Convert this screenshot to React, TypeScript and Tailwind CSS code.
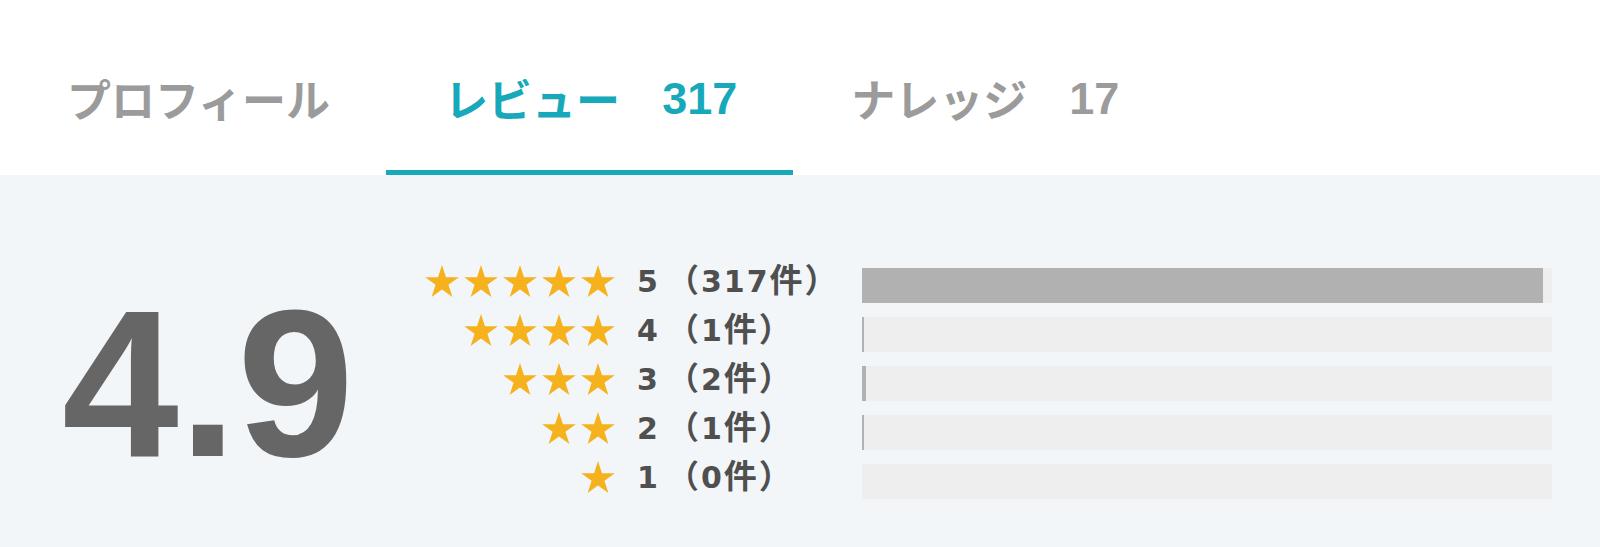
import { useState } from 'react'

const tabs = [
  { key: 'profile', label: 'プロフィール' },
  { key: 'review', label: 'レビュー', count: 317 },
  { key: 'knowledge', label: 'ナレッジ', count: 17 },
]

const breakdown = [
  { stars: 5, count: 317 },
  { stars: 4, count: 1 },
  { stars: 3, count: 2 },
  { stars: 2, count: 1 },
  { stars: 1, count: 0 },
]

const total = breakdown.reduce((sum, r) => sum + r.count, 0)

function Star() {
  return (
    <svg viewBox="2.45 0 95.1 90.45" className="h-[32px] w-[34px] shrink-0">
      <polygon
        fill="#f5b21c"
        points="50,0 61.23,34.55 97.55,34.55 68.16,55.9 79.39,90.45 50,69.1 20.61,90.45 31.84,55.9 2.45,34.55 38.77,34.55"
      />
    </svg>
  )
}

function Tab({
  label,
  count,
  active,
  onClick,
}: {
  label: string
  count?: number
  active: boolean
  onClick: () => void
}) {
  return (
    <button
      onClick={onClick}
      className={`flex h-[175px] items-center border-b-[5px] pl-[58px] pr-[56px] pt-[26px] ${
        active ? 'border-[#17a9ba] text-[#17a9ba]' : 'border-transparent text-[#9b9b9b]'
      }`}
    >
      <span className="text-[44px] font-bold leading-none font-['Noto_Sans_CJK_JP',sans-serif]">
        {label}
      </span>
      {count != null && (
        <span className="ml-[42px] text-[45px] font-bold leading-none font-['Liberation_Sans',sans-serif]">
          {count}
        </span>
      )}
    </button>
  )
}

function RatingRow({ stars, count }: { stars: number; count: number }) {
  const pct = total ? (count / total) * 100 : 0
  return (
    <div className="flex h-[49px] items-center">
      <div className="mb-[10px] flex w-[200px] justify-end gap-[5px]">
        {Array.from({ length: stars }).map((_, i) => (
          <Star key={i} />
        ))}
      </div>
      <div className="mb-[10px] ml-[22px] w-[225px] text-[30px] font-bold leading-none tracking-[2px] text-[#4f4f4f] font-['DejaVu_Sans','Noto_Sans_CJK_JP',sans-serif]">
        {stars}
        <span className="ml-[7px] text-[32px]">（</span>
        {count}
        <span className="text-[33px]">件）</span>
      </div>
      <div className="h-[35px] flex-1 bg-[#eeeeee]">
        <div className="h-full bg-[#b1b1b1]" style={{ width: `${pct}%` }} />
      </div>
    </div>
  )
}

export default function App() {
  const [active, setActive] = useState('review')

  return (
    <div className="min-h-[547px] w-[1600px] bg-white">
      <div className="flex pl-[9px]">
        {tabs.map((t) => (
          <Tab
            key={t.key}
            label={t.label}
            count={t.count}
            active={active === t.key}
            onClick={() => setActive(t.key)}
          />
        ))}
      </div>
      <div className="flex h-[372px] items-center bg-[#f3f6f9] pl-[62px] pr-[48px] pt-[45px]">
        <div className="w-[353px] shrink-0 text-[210px] font-bold leading-none text-[#666666] font-['Liberation_Sans',sans-serif]">
          4.9
        </div>
        <div className="flex-1">
          {breakdown.map((r) => (
            <RatingRow key={r.stars} stars={r.stars} count={r.count} />
          ))}
        </div>
      </div>
    </div>
  )
}
